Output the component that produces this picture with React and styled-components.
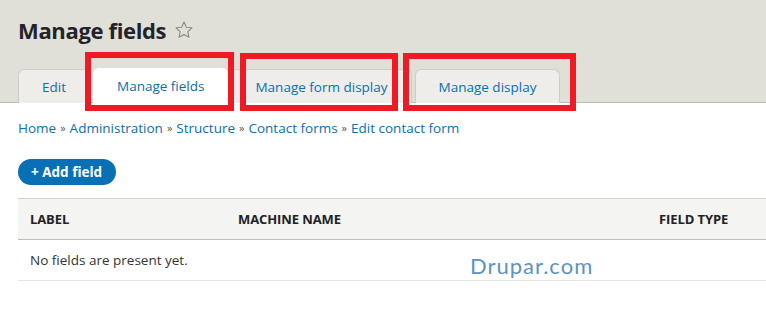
import React from 'react'
import styled, { createGlobalStyle } from 'styled-components'

const GlobalStyle = createGlobalStyle`
  html, body {
    margin: 0;
    padding: 0;
    background: #fff;
  }
  body {
    font-family: "Open Sans", "Noto Sans", sans-serif;
    color: #333;
    overflow: hidden;
  }
`

const tabs = [
  { label: 'Edit' },
  { label: 'Manage fields', active: true },
  { label: 'Manage form display' },
  { label: 'Manage display' },
]

// red annotation boxes drawn over the tabs
const marks = [
  { x: 85, y: 52, w: 149, h: 59 },
  { x: 240, y: 53, w: 158, h: 58 },
  { x: 403, y: 53, w: 173, h: 58 },
]

const crumbs = ['Home', 'Administration', 'Structure', 'Contact forms', 'Edit contact form']

const StarIcon = () => (
  <svg width="20" height="20" viewBox="0 0 24 24" fill="none" stroke="#8a8a86" strokeWidth="1.3" strokeLinejoin="round">
    <path d="M12 2.5l2.9 6.1 6.6.8-4.9 4.6 1.3 6.6L12 17.3l-5.9 3.3 1.3-6.6-4.9-4.6 6.6-.8z" />
  </svg>
)

const App = () => {
  return (
    <Page>
      <GlobalStyle />
      <Header>
        <TitleRow>
          <Title>Manage fields</Title>
          <StarIcon />
        </TitleRow>
        <Tabs>
          {tabs.map((tab) => (
            <Tab key={tab.label} $active={tab.active}>
              {tab.label}
            </Tab>
          ))}
        </Tabs>
        {marks.map((m) => (
          <Mark key={m.x} $x={m.x} $y={m.y} $w={m.w} $h={m.h} />
        ))}
      </Header>
      <Content>
        <Breadcrumb>
          {crumbs.map((c, i) => (
            <React.Fragment key={c}>
              {i > 0 && <Sep>»</Sep>}
              <Crumb>{c}</Crumb>
            </React.Fragment>
          ))}
        </Breadcrumb>
        <AddButton>+ Add field</AddButton>
        <Table>
          <HeadRow>
            <HeadCell>Label</HeadCell>
            <HeadCell>Machine name</HeadCell>
            <HeadCell>Field type</HeadCell>
          </HeadRow>
          <BodyRow>
            <BodyCell>No fields are present yet.</BodyCell>
            <Watermark>Drupar.com</Watermark>
          </BodyRow>
        </Table>
      </Content>
    </Page>
  )
}

const Page = styled.div`
  width: 766px;
  min-height: 335px;
  background: #fff;
`
const Header = styled.div`
  position: relative;
  background: #e0e0d8;
  border-bottom: 1px solid #bcbcb5;
  padding: 14px 0 0 18px;
`
const TitleRow = styled.div`
  display: flex;
  align-items: center;
  gap: 8px;
  height: 32px;
`
const Title = styled.h1`
  margin: 0;
  font-size: 22px;
  font-weight: 700;
  color: #232429;
  letter-spacing: -0.35px;
`
const Tabs = styled.div`
  display: flex;
  align-items: flex-end;
  gap: 3px;
  margin-top: 22px;
`
const Tab = styled.div`
  height: ${(p) => (p.$active ? 35 : 34)}px;
  box-sizing: border-box;
  display: flex;
  align-items: center;
  padding: 0 23px;
  margin-bottom: -1px;
  font-size: 13.5px;
  color: #0a6fb0;
  background: ${(p) => (p.$active ? '#fff' : '#eeede9')};
  border: 1px solid ${(p) => (p.$active ? '#fff' : '#cdccc6')};
  border-bottom: none;
  border-radius: 6px 6px 0 0;
`
const Mark = styled.div`
  position: absolute;
  left: ${(p) => p.$x}px;
  top: ${(p) => p.$y}px;
  width: ${(p) => p.$w}px;
  height: ${(p) => p.$h}px;
  box-sizing: border-box;
  border: 6px solid #ee1a24;
  pointer-events: none;
`
const Content = styled.div`
  padding: 16px 0 0 18px;
`
const Breadcrumb = styled.div`
  display: flex;
  align-items: center;
  gap: 4px;
  font-size: 13.5px;
  line-height: 18px;
`
const Crumb = styled.span`
  color: #0a6fb0;
`
const Sep = styled.span`
  color: #555;
  font-size: 11px;
`
const AddButton = styled.button`
  display: flex;
  align-items: center;
  margin-top: 22px;
  height: 26px;
  padding: 0 14px 0 13px;
  border: none;
  border-radius: 13px;
  background: #0a70b5;
  color: #fff;
  font-family: "Open Sans", sans-serif;
  font-weight: 700;
  font-size: 13.5px;
`
const Table = styled.div`
  margin-top: 13px;
`
const HeadRow = styled.div`
  display: grid;
  grid-template-columns: 208px 421px 1fr;
  height: 42px;
  align-items: center;
  background: #f4f4f2;
  border-top: 1px solid #cfcfcb;
  border-bottom: 1px solid #bdbdb8;
  box-sizing: border-box;
`
const HeadCell = styled.div`
  padding-left: 12px;
  font-size: 13px;
  font-weight: 700;
  text-transform: uppercase;
  color: #222;
  letter-spacing: -0.1px;
`
const BodyRow = styled.div`
  position: relative;
  display: flex;
  align-items: center;
  height: 41px;
  border-bottom: 1px solid #e4e4e0;
  box-sizing: border-box;
`
const BodyCell = styled.div`
  padding-left: 12px;
  font-size: 13.5px;
  color: #333;
`
const Watermark = styled.div`
  position: absolute;
  left: 452px;
  top: 12px;
  font-family: "Lato", sans-serif;
  font-size: 22px;
  letter-spacing: 1px;
  color: #5d93bf;
`

export default App
